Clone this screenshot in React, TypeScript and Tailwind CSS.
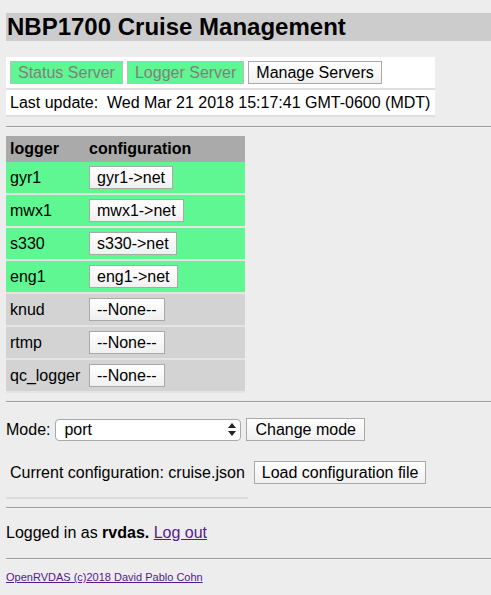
import React from 'react';

const loggers = [
  { name: 'gyr1', config: 'gyr1->net', active: true },
  { name: 'mwx1', config: 'mwx1->net', active: true },
  { name: 's330', config: 's330->net', active: true },
  { name: 'eng1', config: 'eng1->net', active: true },
  { name: 'knud', config: '--None--', active: false },
  { name: 'rtmp', config: '--None--', active: false },
  { name: 'qc_logger', config: '--None--', active: false },
];

const btn =
  'h-[23px] px-[7px] border border-[#a9a9a9] bg-gradient-to-b from-[#ffffff] to-[#f0f0f0] text-[16px] leading-none text-black';

const Rule = () => (
  <div className="h-[2px] border-t border-[#9c9c9c] border-b border-b-[#f4f4f4]" />
);

const SelectArrows = () => (
  <svg width="8" height="13" viewBox="0 0 8 13">
    <path d="M4 0 L8 5 L0 5 Z" fill="#222" />
    <path d="M4 13 L8 8 L0 8 Z" fill="#222" />
  </svg>
);

const App = () => {
  return (
    <div className="min-h-[595px] bg-[#ededed] pl-[6px] pt-[13px] text-[16px] text-black font-['Liberation_Sans',Arial,sans-serif]">
      <h1 className="h-[28px] bg-[#cccccc] pl-[1px] text-[24px] font-bold leading-[28px]">
        NBP1700 Cruise Management
      </h1>

      {/* server nav + last update */}
      <div className="mt-[16px] w-[429px]">
        <div className="flex gap-[4px] bg-white px-[4px] pt-[4px] pb-[4px] border-b-2 border-[#dedede]">
          <button className="h-[23px] px-[7px] border border-[#bdbdbd] bg-[#5ff792] text-[#808080] leading-none">
            Status Server
          </button>
          <button className="h-[23px] px-[7px] border border-[#bdbdbd] bg-[#5ff792] text-[#808080] leading-none">
            Logger Server
          </button>
          <button className={btn}>Manage Servers</button>
        </div>
        <div className="h-[27px] bg-white pl-[4px] leading-[25px] border-b-2 border-[#dedede] whitespace-pre">
          Last update:  Wed Mar 21 2018 15:17:41 GMT-0600 (MDT)
        </div>
      </div>

      <div className="mt-[9px]">
        <Rule />
      </div>

      {/* logger table */}
      <div className="mt-[8px] w-[239px]">
        <div className="flex h-[26px] items-center bg-[#aaaaaa] font-bold">
          <div className="w-[83px] pl-[4px]">logger</div>
          <div>configuration</div>
        </div>
        {loggers.map((l) => (
          <div
            key={l.name}
            className={`flex h-[33px] items-center border-b-2 border-[#e4e4e4] ${
              l.active ? 'bg-[#5ff792]' : 'bg-[#d3d3d3]'
            }`}
          >
            <div className="w-[83px] pl-[4px]">{l.name}</div>
            <button className={btn}>{l.config}</button>
          </div>
        ))}
      </div>

      <div className="mt-[8px]">
        <Rule />
      </div>

      {/* mode selection */}
      <div className="mt-[15px] flex items-center h-[23px]">
        <span className="mr-[5px]">Mode:</span>
        <div className="flex h-[22px] w-[186px] items-center justify-between rounded-[4px] border border-[#a9a9a9] bg-white pl-[8px] pr-[4px]">
          <span>port</span>
          <SelectArrows />
        </div>
        <button className={`${btn} ml-[5px] h-[22px] px-[8px]`}>Change mode</button>
      </div>

      <div className="mt-[20px] flex items-center h-[23px] pl-[4px]">
        <span className="mr-[9px]">Current configuration: cruise.json</span>
        <button className={`${btn} h-[22px] px-[7px]`}>Load configuration file</button>
      </div>

      <div className="mt-[13px] h-[2px] w-[242px] bg-[#dcdcdc]" />

      <div className="mt-[8px]">
        <Rule />
      </div>

      <div className="mt-[14px] leading-[20px]">
        Logged in as <b>rvdas.</b>{' '}
        <a href="#" className="text-[#551a8b] underline">
          Log out
        </a>
      </div>

      <div className="mt-[15px]">
        <Rule />
      </div>

      <div className="mt-[9px] text-[11px]">
        <a href="#" className="text-[#551a8b] underline">
          OpenRVDAS (c)2018 David Pablo Cohn
        </a>
      </div>
    </div>
  );
};

export default App;
